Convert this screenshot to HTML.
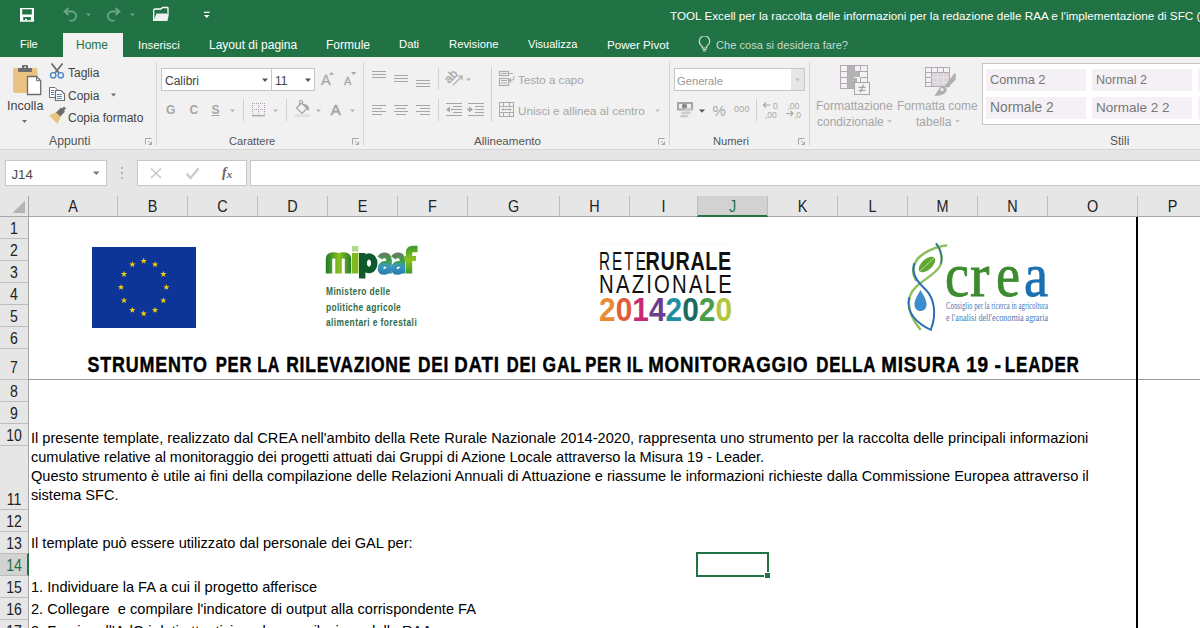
<!DOCTYPE html>
<html><head><meta charset="utf-8">
<style>
*{margin:0;padding:0;box-sizing:border-box}
html,body{width:1200px;height:628px;overflow:hidden;background:#fff;font-family:"Liberation Sans",sans-serif}
.a{position:absolute}
.t{position:absolute;white-space:pre;line-height:1}
#top{left:0;top:0;width:1200px;height:57px;background:#217346}
.tab{color:#fff;font-size:12px}
#rib{left:0;top:57px;width:1200px;height:93px;background:#f1f1f1;border-bottom:1px solid #d6d6d6}
.rt{color:#444;font-size:12px}
.dis{color:#a6a6a6;font-size:12px}
.gl{color:#555;font-size:12px}
.sep{position:absolute;width:1px;background:#d6d6d6}
#fbar{left:0;top:150px;width:1200px;height:66px;background:#e6e6e6}
.box{position:absolute;background:#fff;border:1px solid #c6c6c6}
.ch{position:absolute;top:196px;height:20px;border-right:1px solid #bababa;font-size:15px;color:#222;text-align:center;line-height:20px}
.rh{position:absolute;left:0;width:28px;border-bottom:1px solid #bababa;font-size:15px;color:#222;text-align:center;background:#e6e6e6}
.body{color:#000;font-size:14.6px}
</style></head><body>
<div id="top" class="a"></div>
<svg class="a" style="left:0;top:0" width="220" height="30">
 <path d="M20 8 H34 V21.8 H20 Z M22.2 9.3 V14.5 H31.8 V9.3 Z M23.2 17 V20.3 H30.8 V17 Z" fill="#fff" fill-rule="evenodd"/>
 <rect x="25.2" y="18.8" width="1.8" height="1.6" fill="#fff"/>
 <g fill="none" stroke="#6aa683" stroke-width="1.8">
  <path d="M65 11.5 h6.5 a4.6 4.6 0 0 1 0 9.2 h-2"/>
  <path d="M68.5 8 L64.5 11.5 L68.5 15"/>
  <path d="M119 11.5 h-6.5 a4.6 4.6 0 0 0 0 9.2 h2"/>
  <path d="M115.5 8 L119.5 11.5 L115.5 15"/>
 </g>
 <path d="M86 13.5 h5 l-2.5 2.8z M130 13.5 h5 l-2.5 2.8z" fill="#6aa683"/>
 <path d="M153.7 21 V10.5 q0 -1.5 1.5 -1.5 h5.5 l2 -1.5 h4.5 q0.8 0 0.8 0.8 V13" fill="none" stroke="#fff" stroke-width="1.3"/>
 <path d="M156.5 13.5 H169 L167.5 21 H153.5 Z" fill="#f0f0f0"/>
 <rect x="204" y="11.7" width="5.5" height="1.3" fill="#fff"/>
 <path d="M204 15 h5.5 l-2.75 3z" fill="#fff"/>
</svg>
<!-- tabs -->
<div class="a" style="left:63px;top:33px;width:60px;height:25px;background:#f1f1f1"></div>
<div class="t tab" style="left:20px;top:39px;font-size:11px">File</div>
<div class="t tab" style="left:76px;top:39px;color:#217346">Home</div>
<div class="t tab" style="left:138px;top:39.5px;font-size:11.4px">Inserisci</div>
<div class="t tab" style="left:209px;top:39px">Layout di pagina</div>
<div class="t tab" style="left:326px;top:39px">Formule</div>
<div class="t tab" style="left:399px;top:39px;font-size:11.3px">Dati</div>
<div class="t tab" style="left:449px;top:39px;font-size:11.3px">Revisione</div>
<div class="t tab" style="left:528px;top:39px;font-size:11px">Visualizza</div>
<div class="t tab" style="left:607px;top:39.3px;font-size:11.6px">Power Pivot</div>
<svg class="a" style="left:698px;top:36px" width="14" height="16" viewBox="698 36 14 16">
 <path d="M702.3 46.5 q-3 -2.2 -3 -5.3 a5.2 5.2 0 0 1 10.4 0 q0 3.1 -3 5.3 v1.5 h-4.4 z" fill="none" stroke="#c5dccb" stroke-width="1.2"/>
 <path d="M702.5 49.5 h4 M703 51 h3" stroke="#c5dccb" stroke-width="1"/>
</svg>
<div class="t tab" style="left:716px;top:39.6px;font-size:11.1px;color:#c5dccb">Che cosa si desidera fare?</div>
<div class="t tab" style="left:670px;top:10px;font-size:11.7px">TOOL Excell per la raccolta delle informazioni per la redazione delle RAA e l'implementazione di SFC (</div>

<div id="rib" class="a"></div>

<!-- ===== Appunti ===== -->
<svg class="a" style="left:0;top:57px" width="160" height="92" viewBox="0 57 160 92">
 <rect x="13" y="68" width="24.5" height="25" rx="2" fill="#eac383"/>
 <rect x="18" y="68" width="14" height="4" rx="1" fill="#6d6d6d"/>
 <rect x="22" y="65" width="6" height="4" rx="1" fill="#6d6d6d"/>
 <rect x="24.3" y="66.3" width="1.6" height="1.6" fill="#f1f1f1"/>
 <path d="M27.5 76.5 H36.5 L40.7 80.7 V94.5 H27.5 Z" fill="#fff" stroke="#6d6d6d" stroke-width="1.3"/>
 <path d="M36.5 76.5 V80.7 H40.7" fill="none" stroke="#6d6d6d" stroke-width="1"/>
 <path d="M22 120 h5 l-2.5 3 z" fill="#6d6d6d"/>
 <!-- scissors -->
 <path d="M51.5 63.5 L59 73 M62.5 63.5 L55 73" stroke="#6d6d6d" stroke-width="1.8" fill="none"/>
 <circle cx="53.2" cy="75.3" r="2.7" fill="none" stroke="#4a89c8" stroke-width="1.4"/>
 <circle cx="60.8" cy="75.3" r="2.7" fill="none" stroke="#4a89c8" stroke-width="1.4"/>
 <!-- copy -->
 <path d="M49.5 87.5 H55 L57.5 90 V97.5 H49.5 Z" fill="#fff" stroke="#6d6d6d" stroke-width="1"/>
 <path d="M55.5 90.5 H61 L64.5 94 V100.5 H55.5 Z" fill="#fff" stroke="#6d6d6d" stroke-width="1.2"/>
 <path d="M51 90.5 h3 M51 92.5 h3 M51 94.5 h3 M57 94.5 h5 M57 96.5 h5 M57 98.5 h5" stroke="#3c7cc0" stroke-width="0.9"/>
 <path d="M111 93.5 h5 l-2.5 3 z" fill="#6d6d6d"/>
 <!-- brush -->
 <path d="M49 115.5 L56.5 112 L61 116.5 L57.5 124 Z" fill="#eac383"/>
 <path d="M56 112.5 L61 107.5 L65 111.5 L60.5 116.5 Z" fill="#6d6d6d"/>
 <path d="M61.5 109 L64 106.5 L66 108.5 L63.5 111 Z" fill="#6d6d6d"/>
 <!-- launcher -->
 <path d="M145.5 144.5 V138.5 H151.5 M148 141 L151.5 144.5 M151.5 141.5 V144.5 H148.5" fill="none" stroke="#a6a6a6" stroke-width="1"/>
</svg>
<div class="t rt" style="left:7px;top:99.5px;font-size:12.6px">Incolla</div>
<div class="t rt" style="left:68px;top:67px">Taglia</div>
<div class="t rt" style="left:68px;top:90px">Copia</div>
<div class="t rt" style="left:68px;top:112px">Copia formato</div>
<div class="t gl" style="left:49px;top:135px;font-size:12.2px">Appunti</div>
<div class="sep" style="left:156px;top:62px;height:84px"></div>

<!-- ===== Carattere ===== -->
<div class="box" style="left:161px;top:68px;width:111px;height:23px"></div>
<div class="box" style="left:271px;top:68px;width:44px;height:23px"></div>
<svg class="a" style="left:0;top:57px" width="1200" height="92" viewBox="0 57 1200 92">
 <path d="M262 78.5 h6 l-3 3.5 z M305 78.5 h6 l-3 3.5 z" fill="#555"/>
 <!-- grow/shrink -->
 <text x="321" y="85.3" font-family="Liberation Sans" font-size="14.5" fill="#a6a6a6" stroke="#a6a6a6" stroke-width="0.3">A</text>
 <path d="M329 74.7 l2.5 -2.8 l2.5 2.8 z" fill="#a6a6a6"/>
 <text x="344" y="85.3" font-family="Liberation Sans" font-size="11" fill="#a6a6a6" stroke="#a6a6a6" stroke-width="0.3">A</text>
 <path d="M351 72 h5.3 l-2.65 3 z" fill="#a6a6a6"/>
 <!-- dropdown arrows row2 -->
 <path d="M230 109.5 h5 l-2.5 2.8 z M273 109.5 h5 l-2.5 2.8 z M316 109.5 h5 l-2.5 2.8 z M350 109.5 h5 l-2.5 2.8 z" fill="#b4b4b4"/>
 <line x1="243.5" y1="99" x2="243.5" y2="121" stroke="#d0d0d0"/>
 <line x1="286.5" y1="99" x2="286.5" y2="121" stroke="#d0d0d0"/>
 <!-- borders icon -->
 <rect x="252" y="103" width="13" height="12" fill="#f5f0f5"/>
 <g fill="#a8a2a8"><rect x="252" y="103" width="1" height="1"/><rect x="252" y="109" width="1" height="1"/><rect x="254" y="103" width="1" height="1"/><rect x="254" y="109" width="1" height="1"/><rect x="256" y="103" width="1" height="1"/><rect x="256" y="109" width="1" height="1"/><rect x="258" y="103" width="1" height="1"/><rect x="258" y="109" width="1" height="1"/><rect x="260" y="103" width="1" height="1"/><rect x="260" y="109" width="1" height="1"/><rect x="262" y="103" width="1" height="1"/><rect x="262" y="109" width="1" height="1"/><rect x="264" y="103" width="1" height="1"/><rect x="264" y="109" width="1" height="1"/><rect x="252" y="105" width="1" height="1"/><rect x="258" y="105" width="1" height="1"/><rect x="264" y="105" width="1" height="1"/><rect x="252" y="107" width="1" height="1"/><rect x="258" y="107" width="1" height="1"/><rect x="264" y="107" width="1" height="1"/><rect x="252" y="109" width="1" height="1"/><rect x="258" y="109" width="1" height="1"/><rect x="264" y="109" width="1" height="1"/><rect x="252" y="111" width="1" height="1"/><rect x="258" y="111" width="1" height="1"/><rect x="264" y="111" width="1" height="1"/><rect x="252" y="113" width="1" height="1"/><rect x="258" y="113" width="1" height="1"/><rect x="264" y="113" width="1" height="1"/></g>
 <rect x="252" y="115" width="13" height="1.3" fill="#a6a6a6"/>
 <!-- fill icon -->
 <path d="M296.5 108 L301.5 103 L307 108.5 L302 113.5 Z" fill="#f5f0f5" stroke="#a6a6a6" stroke-width="1.2"/>
 <path d="M299.5 106 V101.5 q0 -1 1 -1 h1 q1 0 1 1 V105" fill="none" stroke="#a6a6a6" stroke-width="1.1"/>
 <path d="M303 104 q4.5 -0.5 6 4 q0.5 1.5 -0.5 3 l-2 -2.5 z" fill="#a6a6a6"/>
 <rect x="294" y="114" width="16" height="3" fill="#e6dfe6"/>
 <!-- A font color -->
 <text x="330.8" y="115" font-family="Liberation Sans" font-size="15" fill="#a6a6a6" stroke="#a6a6a6" stroke-width="0.6">A</text>
 <!-- launchers -->
 <path d="M352.5 144.5 V138.5 H358.5 M355 141 L358.5 144.5 M358.5 141.5 V144.5 H355.5" fill="none" stroke="#a6a6a6" stroke-width="1"/>
 <path d="M658.5 144.5 V138.5 H664.5 M661 141 L664.5 144.5 M664.5 141.5 V144.5 H661.5" fill="none" stroke="#a6a6a6" stroke-width="1"/>
 <path d="M798.5 144.5 V138.5 H804.5 M801 141 L804.5 144.5 M804.5 141.5 V144.5 H801.5" fill="none" stroke="#a6a6a6" stroke-width="1"/>

 <!-- ===== Allineamento ===== -->
 <g stroke="#a6a6a6" stroke-width="1.2" fill="none">
  <path d="M372 71.5 h14 M372 74.5 h14 M372 77.5 h14"/>
  <path d="M394 75.5 h14 M394 78.5 h14 M394 81.5 h14"/>
  <path d="M416 80.5 h14 M416 83.5 h14 M416 86.5 h14"/>
  <path d="M372 105.5 h14 M372 108.5 h10 M372 111.5 h14 M372 114.5 h10"/>
  <path d="M394 105.5 h14 M396 108.5 h10 M394 111.5 h14 M396 114.5 h10"/>
  <path d="M416 105.5 h14 M420 108.5 h10 M416 111.5 h14 M420 114.5 h10"/>
  <!-- indents -->
  <path d="M446 103.5 h16 M453 106.5 h9 M453 109.5 h9 M453 112.5 h9 M446 115.5 h16"/>
  <path d="M468 103.5 h16 M475 106.5 h9 M475 109.5 h9 M475 112.5 h9 M468 115.5 h16"/>
 </g>
 <path d="M446 109.5 L450 106.5 V112.5 Z M451 108.8 h2 v1.4 h-2z" fill="#a6a6a6"/>
 <path d="M473 109.5 L469 106.5 V112.5 Z M467 108.8 h2 v1.4 h-2z" fill="#a6a6a6"/>
 <line x1="438.5" y1="68" x2="438.5" y2="90" stroke="#d0d0d0"/>
 <line x1="438.5" y1="99" x2="438.5" y2="121" stroke="#d0d0d0"/>
 <line x1="491.5" y1="67" x2="491.5" y2="122" stroke="#d0d0d0"/>
 <!-- orientation -->
 <text x="0" y="0" font-family="Liberation Sans" font-size="12" fill="#a6a6a6" stroke="#a6a6a6" stroke-width="0.35" transform="translate(449 84) rotate(-45)">ab</text>
 <path d="M452.8 85.3 L461.5 76.6" stroke="#a6a6a6" stroke-width="1.2"/>
 <path d="M458 76 H462 V80" fill="none" stroke="#a6a6a6" stroke-width="1.2"/>
 <path d="M466 78.5 h5 l-2.5 2.8 z" fill="#b4b4b4"/>
 <!-- wrap text -->
 <g fill="none" stroke="#b0a8b0" stroke-width="1.1">
  <rect x="499.5" y="71.5" width="9" height="4"/>
  <path d="M501 73.5 h6 M508.5 73.5 h4.5"/>
  <rect x="499.5" y="78.5" width="9" height="7"/>
  <path d="M501 80.5 h6 M501 83 h6"/>
  <path d="M514 76 q1 4.5 -4.5 4.5 M511 78.5 l-2 2 l2 2"/>
 </g>
 <!-- merge -->
 <g fill="none" stroke="#b0a8b0" stroke-width="1">
  <rect x="499.5" y="102.5" width="14" height="14"/>
  <path d="M499.5 106.5 h14 M499.5 112.5 h14 M503.5 102.5 v4 M509.5 102.5 v4 M503.5 112.5 v4 M509.5 112.5 v4"/>
  <path d="M502 109.5 h9 M503.5 108 l-1.5 1.5 l1.5 1.5 M509.5 108 l1.5 1.5 l-1.5 1.5"/>
 </g>
 <path d="M655 109.5 h5 l-2.5 2.8 z" fill="#c4c4c4"/>

 <!-- ===== Numeri ===== -->
 <rect x="674.5" y="68.5" width="130" height="22" fill="#fff" stroke="#c6c6c6"/><rect x="791" y="69" width="13" height="21" fill="#e6e6e6"/>
 <path d="M795 78.5 h5 l-2.5 2.8 z" fill="#bdbdbd"/>
 <rect x="677" y="102" width="16" height="8.5" fill="#a6a6a6"/>
 <rect x="679" y="104" width="12" height="4.5" fill="#f3eef3"/>
 <circle cx="684.5" cy="106" r="2.6" fill="#8a8a8a"/>
 <g fill="#d0cad0"><ellipse cx="688" cy="109.8" rx="4.5" ry="1.4"/><ellipse cx="686" cy="113" rx="5" ry="1.4"/><ellipse cx="684" cy="116.2" rx="4.5" ry="1.4"/></g>
 <path d="M699 109.5 h6 l-3 3.2 z" fill="#555"/>
 <line x1="756.5" y1="99" x2="756.5" y2="121" stroke="#d0d0d0"/>
 <!-- CF icon -->
 <rect x="840.5" y="65.5" width="27" height="23" fill="#f5f0f5"/>
 <path d="M848 66 h6 v23 h-6z M854 72 h6 v5 h-6z M854 78 h3 v5 h-3z" fill="#b3b3b3"/>
 <g fill="none" stroke="#b0aab0" stroke-width="1">
  <rect x="840.5" y="65.5" width="27" height="23"/>
  <path d="M840.5 71.5 h7 M854.5 71.5 h13 M840.5 77.5 h7 M860.5 77.5 h7 M840.5 83.5 h7 M857.5 83.5 h10 M847.5 65.5 v23 M860.5 65.5 v6 M860.5 77.5 v11 M854.5 65.5 v6"/>
 </g>
 <rect x="854.5" y="82.5" width="15" height="12" fill="#f5f0f5" stroke="#a6a6a6"/>
 <path d="M858.5 87.3 h7 M858.5 90.3 h7 M863.5 84.5 l-3 8" stroke="#8a8a8a" stroke-width="0.9" fill="none"/>
 <path d="M887 120 h5 l-2.5 2.8 z M955 120 h5 l-2.5 2.8 z" fill="#c4c4c4"/>
 <!-- FT icon -->
 <rect x="925.5" y="67.5" width="24" height="19" fill="#f5f0f5"/>
 <rect x="931" y="73" width="18" height="13" fill="#dcd6dc"/>
 <g fill="none" stroke="#b0aab0" stroke-width="1">
  <rect x="925.5" y="67.5" width="24" height="19"/>
  <path d="M925.5 72.5 h24 M925.5 77.5 h6 M925.5 82.5 h6 M931.5 67.5 v19 M937.5 67.5 v5 M943.5 67.5 v5"/>
 </g>
 <g fill="none" stroke="#e8e4e8" stroke-width="0.8">
  <path d="M931.5 77.5 h17.5 M931.5 82.5 h17.5 M937.5 73 v13 M943.5 73 v13"/>
 </g>
 <path d="M954.5 73 L956 75 L955.5 80 L947 88 L945 86 Z" fill="#b0b0b0"/>
 <path d="M944.5 86.5 L947 89 q0 3 -3 5 q-4 2 -9.5 2 q3 -5 5 -8 q2 -2.5 4.5 -2.5 z" fill="#b0b0b0"/>
 <circle cx="942" cy="89.5" r="1.6" fill="#f1f1f1"/>
 <!-- gallery -->
 <rect x="982.5" y="63.5" width="230" height="61" fill="#fff" stroke="#c6c6c6"/>
 <rect x="986" y="69" width="100" height="22" fill="#f5f0f5"/>
 <rect x="1092" y="69" width="100" height="22" fill="#f5f0f5"/>
 <rect x="1198" y="69" width="10" height="22" fill="#f5f0f5"/>
 <rect x="986" y="97" width="100" height="22" fill="#f5f0f5"/>
 <rect x="1092" y="97" width="100" height="22" fill="#f5f0f5"/>
 <rect x="1198" y="97" width="10" height="22" fill="#f5f0f5"/>
</svg>
<svg class="a" style="left:755px;top:98px" width="50" height="24" viewBox="755 98 50 24">
 <g font-family="Liberation Sans" font-size="8.5" fill="#a6a6a6">
  <text x="773" y="108.5">0</text>
  <text x="765" y="117.5">,00</text>
  <text x="787.5" y="108.5">,00</text>
  <text x="794" y="117.5">,0</text>
 </g>
 <g fill="none" stroke="#a6a6a6" stroke-width="1.1">
  <path d="M763.5 105 h7 M766 102.5 l-2.5 2.5 l2.5 2.5"/>
  <path d="M786 113.5 h7 M790.5 111 l2.5 2.5 l-2.5 2.5"/>
 </g>
</svg>
<div class="sep" style="left:363px;top:62px;height:84px"></div>
<div class="sep" style="left:669px;top:62px;height:84px"></div>
<div class="sep" style="left:809px;top:62px;height:84px"></div>
<div class="t" style="left:165px;top:74.8px;font-size:12px;color:#444;">Calibri</div>
<div class="t" style="left:275px;top:74.8px;font-size:12px;color:#444;">11</div>
<div class="t" style="left:166px;top:104px;font-size:12px;font-weight:bold;color:#a6a6a6">G</div>
<div class="t" style="left:189.5px;top:104px;font-size:12px;font-weight:bold;color:#a6a6a6">C</div>
<div class="t" style="left:211.5px;top:104px;font-size:12px;font-weight:bold;color:#a6a6a6;text-decoration:underline">S</div>
<div class="t" style="left:229px;top:135.6px;font-size:11.1px;color:#555;">Carattere</div>
<div class="t" style="left:518px;top:74.4px;font-size:11.6px;color:#a6a6a6;">Testo a capo</div>
<div class="t" style="left:518px;top:104.8px;font-size:11.7px;color:#a6a6a6;">Unisci e allinea al centro</div>
<div class="t" style="left:474px;top:135.2px;font-size:11.6px;color:#555;">Allineamento</div>
<div class="t" style="left:677px;top:75.5px;font-size:11.2px;color:#999;">Generale</div>
<div class="t" style="left:712.5px;top:103px;font-size:15px;color:#a6a6a6">%</div>
<div class="t" style="left:734px;top:105.3px;font-size:9px;color:#a6a6a6;letter-spacing:0.2px">000</div>
<div class="t" style="left:713px;top:135.5px;font-size:11.2px;color:#555;">Numeri</div>
<div class="t" style="left:816px;top:100.4px;font-size:12px;color:#a6a6a6;">Formattazione</div>
<div class="t" style="left:817px;top:115.8px;font-size:12px;color:#a6a6a6;">condizionale</div>
<div class="t" style="left:897px;top:100.4px;font-size:12px;color:#a6a6a6;">Formatta come</div>
<div class="t" style="left:916px;top:115.8px;font-size:12px;color:#a6a6a6;">tabella</div>
<div class="t" style="left:990px;top:73.7px;font-size:12.8px;color:#777;">Comma 2</div>
<div class="t" style="left:1096px;top:73.8px;font-size:12.6px;color:#777;">Normal 2</div>
<div class="t" style="left:990px;top:100.8px;font-size:13.8px;color:#777;">Normale 2</div>
<div class="t" style="left:1096px;top:101.1px;font-size:13.5px;color:#777;">Normale 2 2</div>
<div class="t" style="left:1110px;top:134.8px;font-size:12px;color:#555;">Stili</div>
<div id="fbar" class="a"></div>
<div class="box" style="left:5px;top:160px;width:102px;height:26px;border-color:#c6c6c6"></div>
<div class="t" style="left:11.5px;top:167.8px;font-size:13.2px;color:#4a4a4a;">J14</div>
<div class="box" style="left:137px;top:160px;width:110px;height:26px"></div>
<div class="box" style="left:250px;top:160px;width:960px;height:26px"></div>
<svg class="a" style="left:0;top:150px" width="260" height="46" viewBox="0 150 260 46">
 <path d="M93 171.5 h6.5 l-3.25 3.5 z" fill="#777"/>
 <rect x="121" y="167" width="2" height="2" fill="#b4b4b4"/><rect x="121" y="172" width="2" height="2" fill="#b4b4b4"/><rect x="121" y="177" width="2" height="2" fill="#b4b4b4"/>
 <path d="M151 168.5 L161 178 M161 168.5 L151 178" stroke="#c8c8c8" stroke-width="1.6"/>
 <path d="M186.5 173.5 L190.5 178 L198.5 168.5" fill="none" stroke="#cbcbcb" stroke-width="2.4"/>
</svg>
<div class="t" style="left:222px;top:166px;font-family:'Liberation Serif';font-style:italic;font-weight:bold;font-size:14px;color:#666">f<span style="font-size:11px;font-weight:bold;position:relative;top:1px">x</span></div>
<div class="a" style="left:0;top:196px;width:1200px;height:20px;background:#e6e6e6"></div>
<div class="a" style="left:698px;top:196px;width:69px;height:20px;background:#d2d2d2"></div>
<div class="a" style="left:0;top:216px;width:1200px;height:1px;background:#a6a6a6"></div>
<div class="a" style="left:697px;top:215px;width:71px;height:2px;background:#217346"></div>
<div class="a" style="left:0;top:217px;width:28px;height:411px;background:#e6e6e6"></div>
<div class="a" style="left:28px;top:196px;width:1px;height:432px;background:#a6a6a6"></div>
<svg class="a" style="left:12px;top:200px" width="14" height="14"><path d="M13 0.5 V13 H0.5 Z" fill="#b4b4b4"/></svg>
<div class="a" style="left:117px;top:196px;width:1px;height:20px;background:#bdbdbd"></div>
<div class="t" style="left:29px;top:199.1px;width:88px;text-align:center;font-size:16px;transform:scaleX(0.9);color:#222">A</div>
<div class="a" style="left:187px;top:196px;width:1px;height:20px;background:#bdbdbd"></div>
<div class="t" style="left:118px;top:199.1px;width:69px;text-align:center;font-size:16px;transform:scaleX(0.9);color:#222">B</div>
<div class="a" style="left:257px;top:196px;width:1px;height:20px;background:#bdbdbd"></div>
<div class="t" style="left:188px;top:199.1px;width:69px;text-align:center;font-size:16px;transform:scaleX(0.9);color:#222">C</div>
<div class="a" style="left:327px;top:196px;width:1px;height:20px;background:#bdbdbd"></div>
<div class="t" style="left:258px;top:199.1px;width:69px;text-align:center;font-size:16px;transform:scaleX(0.9);color:#222">D</div>
<div class="a" style="left:397px;top:196px;width:1px;height:20px;background:#bdbdbd"></div>
<div class="t" style="left:328px;top:199.1px;width:69px;text-align:center;font-size:16px;transform:scaleX(0.9);color:#222">E</div>
<div class="a" style="left:467px;top:196px;width:1px;height:20px;background:#bdbdbd"></div>
<div class="t" style="left:398px;top:199.1px;width:69px;text-align:center;font-size:16px;transform:scaleX(0.9);color:#222">F</div>
<div class="a" style="left:559px;top:196px;width:1px;height:20px;background:#bdbdbd"></div>
<div class="t" style="left:468px;top:199.1px;width:91px;text-align:center;font-size:16px;transform:scaleX(0.9);color:#222">G</div>
<div class="a" style="left:629px;top:196px;width:1px;height:20px;background:#bdbdbd"></div>
<div class="t" style="left:560px;top:199.1px;width:69px;text-align:center;font-size:16px;transform:scaleX(0.9);color:#222">H</div>
<div class="a" style="left:697px;top:196px;width:1px;height:20px;background:#bdbdbd"></div>
<div class="t" style="left:630px;top:199.1px;width:67px;text-align:center;font-size:16px;transform:scaleX(0.9);color:#222">I</div>
<div class="a" style="left:767px;top:196px;width:1px;height:20px;background:#bdbdbd"></div>
<div class="t" style="left:698px;top:199.1px;width:69px;text-align:center;font-size:16px;transform:scaleX(0.9);color:#217346">J</div>
<div class="a" style="left:837px;top:196px;width:1px;height:20px;background:#bdbdbd"></div>
<div class="t" style="left:768px;top:199.1px;width:69px;text-align:center;font-size:16px;transform:scaleX(0.9);color:#222">K</div>
<div class="a" style="left:907px;top:196px;width:1px;height:20px;background:#bdbdbd"></div>
<div class="t" style="left:838px;top:199.1px;width:69px;text-align:center;font-size:16px;transform:scaleX(0.9);color:#222">L</div>
<div class="a" style="left:977px;top:196px;width:1px;height:20px;background:#bdbdbd"></div>
<div class="t" style="left:908px;top:199.1px;width:69px;text-align:center;font-size:16px;transform:scaleX(0.9);color:#222">M</div>
<div class="a" style="left:1047px;top:196px;width:1px;height:20px;background:#bdbdbd"></div>
<div class="t" style="left:978px;top:199.1px;width:69px;text-align:center;font-size:16px;transform:scaleX(0.9);color:#222">N</div>
<div class="a" style="left:1137px;top:196px;width:1px;height:20px;background:#bdbdbd"></div>
<div class="t" style="left:1048px;top:199.1px;width:89px;text-align:center;font-size:16px;transform:scaleX(0.9);color:#222">O</div>
<div class="a" style="left:1207px;top:196px;width:1px;height:20px;background:#bdbdbd"></div>
<div class="t" style="left:1138px;top:199.1px;width:69px;text-align:center;font-size:16px;transform:scaleX(0.9);color:#222">P</div>
<div class="a" style="left:0;top:554px;width:28px;height:21px;background:#d2d2d2"></div>
<div class="a" style="left:27px;top:553px;width:2px;height:23px;background:#217346"></div>
<div class="a" style="left:0;top:238px;width:28px;height:1px;background:#bdbdbd"></div>
<div class="t" style="left:0;top:221.2px;width:28px;text-align:center;font-size:16px;transform:scaleX(0.88);color:#222">1</div>
<div class="a" style="left:0;top:260px;width:28px;height:1px;background:#bdbdbd"></div>
<div class="t" style="left:0;top:243.2px;width:28px;text-align:center;font-size:16px;transform:scaleX(0.88);color:#222">2</div>
<div class="a" style="left:0;top:282px;width:28px;height:1px;background:#bdbdbd"></div>
<div class="t" style="left:0;top:265.2px;width:28px;text-align:center;font-size:16px;transform:scaleX(0.88);color:#222">3</div>
<div class="a" style="left:0;top:304px;width:28px;height:1px;background:#bdbdbd"></div>
<div class="t" style="left:0;top:287.2px;width:28px;text-align:center;font-size:16px;transform:scaleX(0.88);color:#222">4</div>
<div class="a" style="left:0;top:326px;width:28px;height:1px;background:#bdbdbd"></div>
<div class="t" style="left:0;top:309.2px;width:28px;text-align:center;font-size:16px;transform:scaleX(0.88);color:#222">5</div>
<div class="a" style="left:0;top:348px;width:28px;height:1px;background:#bdbdbd"></div>
<div class="t" style="left:0;top:331.2px;width:28px;text-align:center;font-size:16px;transform:scaleX(0.88);color:#222">6</div>
<div class="a" style="left:0;top:379px;width:28px;height:1px;background:#bdbdbd"></div>
<div class="t" style="left:0;top:360.2px;width:28px;text-align:center;font-size:16px;transform:scaleX(0.88);color:#222">7</div>
<div class="a" style="left:0;top:401px;width:28px;height:1px;background:#bdbdbd"></div>
<div class="t" style="left:0;top:384.2px;width:28px;text-align:center;font-size:16px;transform:scaleX(0.88);color:#222">8</div>
<div class="a" style="left:0;top:423px;width:28px;height:1px;background:#bdbdbd"></div>
<div class="t" style="left:0;top:406.2px;width:28px;text-align:center;font-size:16px;transform:scaleX(0.88);color:#222">9</div>
<div class="a" style="left:0;top:445px;width:28px;height:1px;background:#bdbdbd"></div>
<div class="t" style="left:0;top:428.2px;width:28px;text-align:center;font-size:16px;transform:scaleX(0.88);color:#222">10</div>
<div class="a" style="left:0;top:509px;width:28px;height:1px;background:#bdbdbd"></div>
<div class="t" style="left:0;top:492.2px;width:28px;text-align:center;font-size:16px;transform:scaleX(0.88);color:#222">11</div>
<div class="a" style="left:0;top:531px;width:28px;height:1px;background:#bdbdbd"></div>
<div class="t" style="left:0;top:514.2px;width:28px;text-align:center;font-size:16px;transform:scaleX(0.88);color:#222">12</div>
<div class="a" style="left:0;top:553px;width:28px;height:1px;background:#bdbdbd"></div>
<div class="t" style="left:0;top:536.2px;width:28px;text-align:center;font-size:16px;transform:scaleX(0.88);color:#222">13</div>
<div class="a" style="left:0;top:575px;width:28px;height:1px;background:#bdbdbd"></div>
<div class="t" style="left:0;top:558.2px;width:28px;text-align:center;font-size:16px;transform:scaleX(0.88);color:#217346">14</div>
<div class="a" style="left:0;top:597px;width:28px;height:1px;background:#bdbdbd"></div>
<div class="t" style="left:0;top:580.2px;width:28px;text-align:center;font-size:16px;transform:scaleX(0.88);color:#222">15</div>
<div class="a" style="left:0;top:619px;width:28px;height:1px;background:#bdbdbd"></div>
<div class="t" style="left:0;top:602.2px;width:28px;text-align:center;font-size:16px;transform:scaleX(0.88);color:#222">16</div>
<div class="a" style="left:0;top:641px;width:28px;height:1px;background:#bdbdbd"></div>
<div class="t" style="left:0;top:624.2px;width:28px;text-align:center;font-size:16px;transform:scaleX(0.88);color:#222">17</div>
<div class="a" style="left:29px;top:379px;width:1171px;height:1px;background:#9a9a9a"></div>
<div class="a" style="left:1136px;top:217px;width:2px;height:411px;background:#000"></div>
<div class="a" style="left:696px;top:552px;width:73px;height:25px;border:2px solid #217346"></div>
<div class="a" style="left:764px;top:572px;width:7px;height:7px;background:#217346;border:1px solid #fff"></div>
<svg class="a" style="left:0;top:345px" width="1136" height="34" viewBox="0 345 1136 34"><g font-family="Liberation Sans" font-weight="bold" font-size="22" fill="#000" stroke="#000" stroke-width="0.45" letter-spacing="1">
<text transform="translate(87.50 0) scale(0.8139 1)" x="0" y="372">STRUMENTO</text>
<text transform="translate(215.74 0) scale(0.7552 1)" x="0" y="372">PER</text>
<text transform="translate(257.27 0) scale(0.7303 1)" x="0" y="372">LA</text>
<text transform="translate(286.20 0) scale(0.7956 1)" x="0" y="372">RILEVAZIONE</text>
<text transform="translate(417.96 0) scale(0.7863 1)" x="0" y="372">DEI</text>
<text transform="translate(454.15 0) scale(0.8501 1)" x="0" y="372">DATI</text>
<text transform="translate(506.75 0) scale(0.7522 1)" x="0" y="372">DEI</text>
<text transform="translate(542.50 0) scale(0.7938 1)" x="0" y="372">GAL</text>
<text transform="translate(585.24 0) scale(0.7552 1)" x="0" y="372">PER</text>
<text transform="translate(626.72 0) scale(0.7848 1)" x="0" y="372">IL</text>
<text transform="translate(648.15 0) scale(0.8489 1)" x="0" y="372">MONITORAGGIO</text>
<text transform="translate(816.23 0) scale(0.7653 1)" x="0" y="372">DELLA</text>
<text transform="translate(881.14 0) scale(0.8582 1)" x="0" y="372">MISURA</text>
<text transform="translate(966.13 0) scale(0.8665 1)" x="0" y="372">19</text>
<text transform="translate(994.40 0) scale(0.8857 1)" x="0" y="372">-</text>
<text transform="translate(1004.82 0) scale(0.7762 1)" x="0" y="372">LEADER</text>
</g></svg>
<div class="t" style="left:31px;top:431.1px;font-size:14.6px;color:#000;">Il presente template, realizzato dal CREA nell'ambito della Rete Rurale Nazionale 2014-2020, rappresenta uno strumento per la raccolta delle principali informazioni</div>
<div class="t" style="left:31px;top:450.1px;font-size:14.6px;color:#000;letter-spacing:-0.064px">cumulative relative al monitoraggio dei progetti attuati dai Gruppi di Azione Locale attraverso la Misura 19 - Leader.</div>
<div class="t" style="left:31px;top:469.1px;font-size:14.6px;color:#000;">Questo strumento è utile ai fini della compilazione delle Relazioni Annuali di Attuazione e riassume le informazioni richieste dalla Commissione Europea attraverso il</div>
<div class="t" style="left:31px;top:487.6px;font-size:14.6px;color:#000;">sistema SFC.</div>
<div class="t" style="left:31px;top:535.6px;font-size:14.6px;color:#000;">Il template può essere utilizzato dal personale dei GAL per:</div>
<div class="t" style="left:31px;top:579.6px;font-size:14.6px;color:#000;">1. Individuare la FA a cui il progetto afferisce</div>
<div class="t" style="left:31px;top:601.6px;font-size:14.6px;color:#000;">2. Collegare  e compilare l'indicatore di output alla corrispondente FA</div>
<div class="t" style="left:31px;top:623.6px;font-size:14.6px;color:#000;">3. Fornire all'AdG i dati attuativi per la compilazione della RAA</div>

<svg class="a" style="left:0;top:217px" width="1136" height="130" viewBox="0 217 1136 130">
<rect x="92" y="247" width="104" height="81" fill="#0d3597"/>
<polygon points="143.70,257.60 144.46,259.95 146.93,259.95 144.94,261.40 145.70,263.75 143.70,262.30 141.70,263.75 142.46,261.40 140.47,259.95 142.94,259.95" fill="#f5d000"/>
<polygon points="155.05,261.12 155.81,263.47 158.28,263.47 156.29,264.92 157.05,267.27 155.05,265.82 153.05,267.27 153.81,264.92 151.82,263.47 154.29,263.47" fill="#f5d000"/>
<polygon points="163.36,270.75 164.12,273.10 166.59,273.10 164.59,274.55 165.36,276.90 163.36,275.45 161.36,276.90 162.12,274.55 160.13,273.10 162.60,273.10" fill="#f5d000"/>
<polygon points="166.40,283.90 167.16,286.25 169.63,286.25 167.64,287.70 168.40,290.05 166.40,288.60 164.40,290.05 165.16,287.70 163.17,286.25 165.64,286.25" fill="#f5d000"/>
<polygon points="163.36,297.05 164.12,299.40 166.59,299.40 164.59,300.85 165.36,303.20 163.36,301.75 161.36,303.20 162.12,300.85 160.13,299.40 162.60,299.40" fill="#f5d000"/>
<polygon points="155.05,306.68 155.81,309.03 158.28,309.03 156.29,310.48 157.05,312.83 155.05,311.38 153.05,312.83 153.81,310.48 151.82,309.03 154.29,309.03" fill="#f5d000"/>
<polygon points="143.70,310.20 144.46,312.55 146.93,312.55 144.94,314.00 145.70,316.35 143.70,314.90 141.70,316.35 142.46,314.00 140.47,312.55 142.94,312.55" fill="#f5d000"/>
<polygon points="132.35,306.68 133.11,309.03 135.58,309.03 133.59,310.48 134.35,312.83 132.35,311.38 130.35,312.83 131.11,310.48 129.12,309.03 131.59,309.03" fill="#f5d000"/>
<polygon points="124.04,297.05 124.80,299.40 127.27,299.40 125.28,300.85 126.04,303.20 124.04,301.75 122.04,303.20 122.81,300.85 120.81,299.40 123.28,299.40" fill="#f5d000"/>
<polygon points="121.00,283.90 121.76,286.25 124.23,286.25 122.24,287.70 123.00,290.05 121.00,288.60 119.00,290.05 119.76,287.70 117.77,286.25 120.24,286.25" fill="#f5d000"/>
<polygon points="124.04,270.75 124.80,273.10 127.27,273.10 125.28,274.55 126.04,276.90 124.04,275.45 122.04,276.90 122.81,274.55 120.81,273.10 123.28,273.10" fill="#f5d000"/>
<polygon points="132.35,261.12 133.11,263.47 135.58,263.47 133.59,264.92 134.35,267.27 132.35,265.82 130.35,267.27 131.11,264.92 129.12,263.47 131.59,263.47" fill="#f5d000"/>
<defs>
<linearGradient id="gm" gradientUnits="userSpaceOnUse" x1="326" y1="0" x2="352" y2="0"><stop offset="0" stop-color="#1f7a2e"/><stop offset="0.5" stop-color="#8cc21c"/><stop offset="1" stop-color="#1f7a2e"/></linearGradient>
<linearGradient id="gf" gradientUnits="userSpaceOnUse" x1="0" y1="246" x2="0" y2="274"><stop offset="0" stop-color="#3a9a2a"/><stop offset="0.5" stop-color="#8cc21c"/><stop offset="1" stop-color="#3a9a2a"/></linearGradient>
<linearGradient id="ga" gradientUnits="userSpaceOnUse" x1="0" y1="253" x2="0" y2="275"><stop offset="0" stop-color="#6a7a6a"/><stop offset="0.35" stop-color="#3aa040"/><stop offset="0.6" stop-color="#3a98c0"/><stop offset="1" stop-color="#2a78a8"/></linearGradient>
</defs>
<g fill="none" stroke-width="6.4">
<path d="M329 273.5 V259 Q329 255.4 333.8 255.4 Q338.5 255.4 338.5 259 V273.5 M338.5 259 Q338.5 255.4 343.2 255.4 Q348 255.4 348 259 V273.5" stroke="url(#gm)"/>
<path d="M355.2 253 V273.5" stroke="#7fb81e"/>
<path d="M355.2 246 V251.5" stroke="#b5d98a"/>
<path d="M362.2 253 V278.5" stroke="#0f5a2c"/>
<ellipse cx="369" cy="263.2" rx="5.3" ry="6.8" stroke="#0f5a2c"/>
<path d="M380 258 Q382 254.5 386 255.5 Q389 256.5 389 260 V273.5 M387 264 Q381 263 380.5 268.5 Q380.5 272 384 272 Q387 272 388 269" stroke="url(#ga)" stroke-width="5.6"/>
<path d="M393.5 258 Q395.5 254.5 399.5 255.5 Q402.5 256.5 402.5 260 V273.5 M400.5 264 Q394.5 263 394 268.5 Q394 272 397.5 272 Q400.5 272 401.5 269" stroke="url(#ga)" stroke-width="5.6"/>
<path d="M409 273.5 V253 Q409 249 413.5 249 H417.5" stroke="url(#gf)"/>
<path d="M404.5 258.5 H416" stroke="url(#gf)" stroke-width="5"/>
</g>
<g font-family="Liberation Sans" font-weight="bold" font-size="10" fill="#2d6b47">
<text transform="translate(326 0) scale(0.84 1)" x="0" y="295" textLength="76.5" lengthAdjust="spacing">Ministero delle</text>
<text transform="translate(326 0) scale(0.84 1)" x="0" y="311" textLength="89" lengthAdjust="spacing">politiche agricole</text>
<text transform="translate(326 0) scale(0.84 1)" x="0" y="326.5" textLength="108" lengthAdjust="spacing">alimentari e forestali</text>
</g>
<!-- rete rurale -->
<line x1="600" y1="243.5" x2="730" y2="243.5" stroke="#f4f4f4" stroke-width="1" stroke-dasharray="2 2"/>
<g font-family="Liberation Sans" font-size="25.4" fill="#111">
<text transform="translate(599 0) scale(0.6 1)" x="0" y="269.8" textLength="78" lengthAdjust="spacing">RETE</text>
<text transform="translate(599 0) scale(0.8 1)" x="0" y="293.3" textLength="166" lengthAdjust="spacing">NAZIONALE</text>
<text transform="translate(645.5 0) scale(0.78 1)" x="0" y="269.8" textLength="110" lengthAdjust="spacing" font-weight="bold">RURALE</text>
</g>
<text x="599" y="321" font-family="Liberation Sans" font-weight="bold" font-size="33.5" textLength="133" lengthAdjust="spacingAndGlyphs"><tspan fill="#e98a35">2</tspan><tspan fill="#e45c3c">0</tspan><tspan fill="#c72a75">1</tspan><tspan fill="#6c3d8f">4</tspan><tspan fill="#1f8ea0">2</tspan><tspan fill="#1b6b63">0</tspan><tspan fill="#4c9d4a">2</tspan><tspan fill="#b3c73a">0</tspan></text>
<!-- crea -->
<g fill="none" stroke-linecap="round">
<path d="M946 245.5 C934 247 917 254 914 266 C912 273 914 277 916 280" stroke="#8dbf5a" stroke-width="2.6"/>
<path d="M936.5 244 C942 251 943 260 940 266 C934 277 914 283 910 296 C907 306 911 318 920 329" stroke="#8dbf5a" stroke-width="2.4"/>
<path d="M936.5 244 C941 250 942.5 258 941 263" stroke="#2a6db5" stroke-width="1.5"/>
<path d="M914 264 C911 276 920 284 926 290 C934 298 937 314 931 329" stroke="#2a6db5" stroke-width="2"/>
<path d="M909 298 C906 312 916 323 931 330" stroke="#2a6db5" stroke-width="1.8"/>
</g>
<ellipse cx="927" cy="264.5" rx="10" ry="5.3" transform="rotate(-42 927 264.5)" fill="#5fa832"/>
<path d="M934 258 L920 271" stroke="#d8ecc0" stroke-width="0.7"/>
<path d="M920.5 290 C917 296 914.5 300 914.5 304.5 C914.5 308.5 917 311 920.5 311 C924 311 926.5 308.5 926.5 304.5 C926.5 300 924 296 920.5 290 Z" fill="#3b8fcf"/>
<g font-family="Liberation Serif" font-size="61.5" stroke-width="0.8">
<text x="945" y="296.5" fill="#3d8b2e" stroke="#3d8b2e" transform="translate(945 0) scale(0.88 1) translate(-945 0)">c</text>
<text x="970" y="296.5" fill="#3d8b2e" stroke="#3d8b2e" transform="translate(970 0) scale(0.95 1) translate(-970 0)">r</text>
<text x="996" y="296.5" fill="#3d8b2e" stroke="#3d8b2e" transform="translate(996 0) scale(0.88 1) translate(-996 0)">e</text>
<text x="1024" y="296.5" fill="#1a6fb0" stroke="#1a6fb0" transform="translate(1024 0) scale(0.88 1) translate(-1024 0)">a</text>
</g>
<g font-family="Liberation Serif" font-size="10" fill="#4a7ab8">
<text x="946" y="309" textLength="102" lengthAdjust="spacingAndGlyphs">Consiglio per la ricerca in agricoltura</text>
<text x="946" y="320.5" textLength="102" lengthAdjust="spacingAndGlyphs">e  l'analisi  dell'economia  agraria</text>
</g>
</svg>
</body></html>
